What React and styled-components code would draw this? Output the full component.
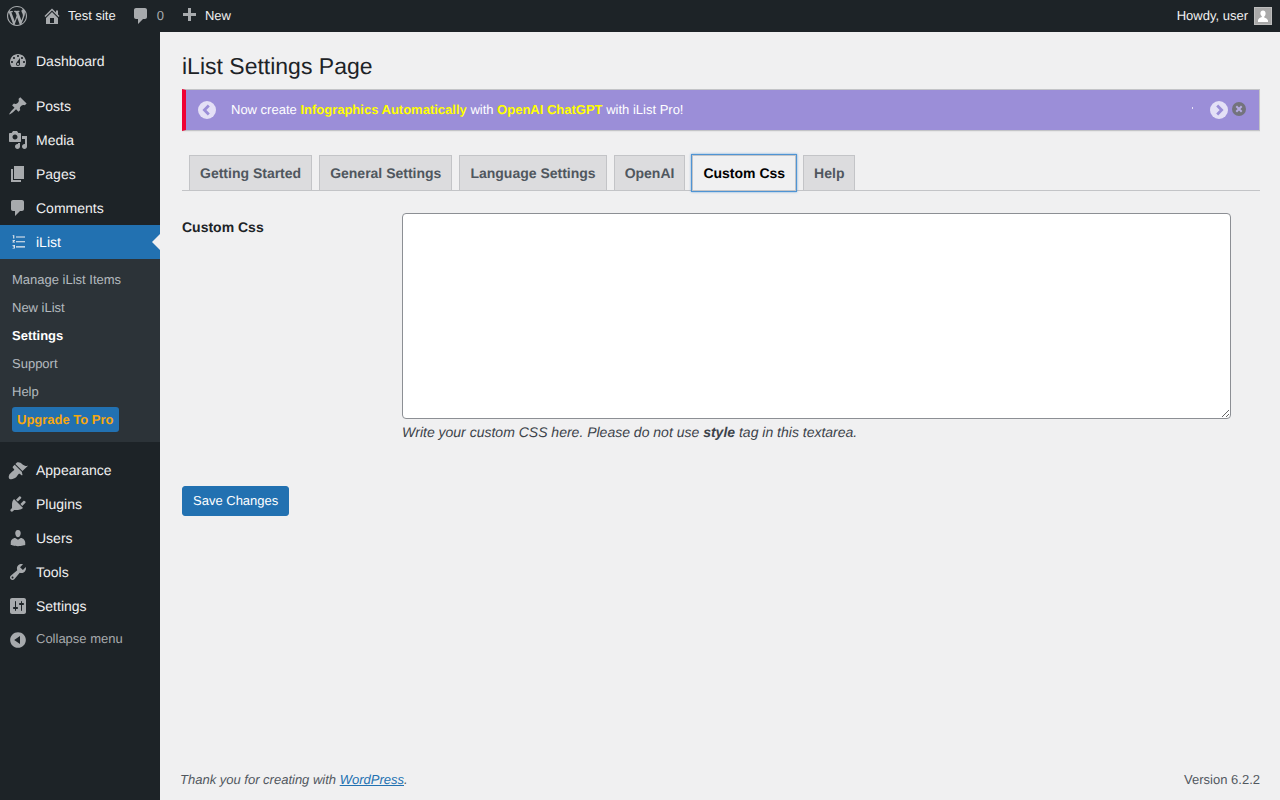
import React from 'react';
import styled, { createGlobalStyle } from 'styled-components';

const Global = createGlobalStyle`
  html, body { margin: 0; padding: 0; background: #f0f0f1; }
  body { font-family: "Liberation Sans", Arial, sans-serif; font-size: 13px; line-height: 1.4em; color: #3c434a; text-rendering: geometricPrecision; }
  * { box-sizing: border-box; }
`;

const P = {
  wp: 'M20 10c0-5.51-4.49-10-10-10C4.48 0 0 4.49 0 10c0 5.52 4.48 10 10 10 5.51 0 10-4.48 10-10zM7.78 15.37L4.37 6.22c.55-.02 1.17-.08 1.17-.08.5-.06.44-1.13-.06-1.11 0 0-1.45.11-2.37.11-.18 0-.37 0-.58-.01C4.12 2.69 6.87 1.11 10 1.11c2.33 0 4.45.87 6.05 2.34-.68-.11-1.65.39-1.65 1.58 0 .74.45 1.36.9 2.1.35.61.55 1.36.55 2.46 0 1.49-1.4 5-1.4 5l-3.03-8.37c.54-.02.82-.17.82-.17.5-.05.44-1.25-.06-1.22 0 0-1.44.12-2.38.12-.87 0-2.33-.12-2.33-.12-.5-.03-.56 1.2-.06 1.22l.92.08 1.26 3.41zM17.41 10c.24-.64.74-1.87.43-4.25.7 1.29 1.05 2.71 1.05 4.25 0 3.29-1.73 6.24-4.4 7.78.97-2.59 1.94-5.2 2.92-7.78zM6.1 18.09C3.12 16.65 1.11 13.53 1.11 10c0-1.3.23-2.48.72-3.59C3.25 10.3 4.67 14.2 6.1 18.09zm4.03-6.63l2.58 6.98c-.86.29-1.76.45-2.71.45-.79 0-1.57-.11-2.29-.33.81-2.38 1.62-4.74 2.42-7.1z',
  home: 'M16 8.5l1.53 1.53-1.06 1.06L10 4.62l-6.47 6.47-1.06-1.06L10 2.5l4 4v-2h2v4zm-6-2.46l6 5.99V18H4v-5.97zM12 17v-5H8v5h4z',
  comments: 'M5 2h9c1.1 0 2 .9 2 2v7c0 1.1-.9 2-2 2h-2l-5 5v-5H5c-1.1 0-2-.9-2-2V4c0-1.1.9-2 2-2z',
  plus: 'M17 7v3h-5v5H9v-5H4V7h5V2h3v5h5z',
  dashboard: 'M3.76 16h12.48c1.1-1.37 1.76-3.11 1.76-5 0-4.42-3.58-8-8-8s-8 3.58-8 8c0 1.89.66 3.63 1.76 5zM10 4c.55 0 1 .45 1 1s-.45 1-1 1-1-.45-1-1 .45-1 1-1zM6 6c.55 0 1 .45 1 1s-.45 1-1 1-1-.45-1-1 .45-1 1-1zm8 0c.55 0 1 .45 1 1s-.45 1-1 1-1-.45-1-1 .45-1 1-1zm-5.37 5.55L12 7v6c0 1.1-.9 2-2 2s-2-.9-2-2c0-.57.24-1.08.63-1.45zM4 10c.55 0 1 .45 1 1s-.45 1-1 1-1-.45-1-1 .45-1 1-1zm12 0c.55 0 1 .45 1 1s-.45 1-1 1-1-.45-1-1 .45-1 1-1zm-5 3c0-.55-.45-1-1-1s-1 .45-1 1 .45 1 1 1 1-.45 1-1z',
  post: 'M10.44 3.02l1.82-1.82 6.36 6.35-1.83 1.82c-1.05-.68-2.48-.57-3.41.36l-.75.75c-.92.93-1.04 2.35-.35 3.41l-1.83 1.82-2.41-2.41-2.8 2.79c-.42.42-3.38 2.71-3.8 2.29s1.86-3.39 2.28-3.81l2.79-2.79L4.1 9.36l1.83-1.82c1.05.69 2.48.57 3.4-.36l.75-.75c.93-.92 1.05-2.35.36-3.41z',
  media: 'M13 11V4c0-.55-.45-1-1-1h-1.67L9 1H5L3.67 3H2c-.55 0-1 .45-1 1v7c0 .55.45 1 1 1h10c.55 0 1-.45 1-1zM7 4.5c1.38 0 2.5 1.12 2.5 2.5S8.38 9.5 7 9.5 4.5 8.38 4.5 7 5.62 4.5 7 4.5zM14 6h5v10.5c0 1.38-1.12 2.5-2.5 2.5S14 17.88 14 16.5s1.12-2.5 2.5-2.5c.17 0 .34.02.5.05V9h-3V6zm-4 8.05V13h2v3.5c0 1.38-1.12 2.5-2.5 2.5S7 17.88 7 16.5 8.12 14 9.5 14c.17 0 .34.02.5.05z',
  page: 'M6 15V2h10v13H6zm-1 1h8v2H3V5h2v11z',
  appearance: 'M14.48 11.06L7.41 3.99l1.5-1.5c.5-.56 2.3-.47 3.51.32.42.28 1.43 1.28 2.91 2.1 1.18.64 2.45 1.26 4.67.88zm-.71.71L6.7 4.7 4.93 6.47c-.39.39-.39 1.02 0 1.41l1.06 1.06c.39.39.39 1.03 0 1.42-.6.6-1.43 1.11-2.21 1.69-.35.26-.7.53-1.01.84C1.43 13.71 0 16.5 1.28 18.72c2.22 1.28 5.01-.15 6.82-1.49.31-.31.58-.66.84-1.01.58-.78 1.09-1.61 1.69-2.21.39-.39 1.03-.39 1.42 0l1.06 1.06c.39.39 1.02.39 1.41 0z',
  plugins: 'M13.11 4.36L9.87 7.6 8 5.73l3.24-3.24c.35-.34 1.05-.2 1.56.32.52.51.66 1.21.31 1.55zm-8 1.77l.91-1.12 9.01 9.01-1.19.84c-.71.71-2.63 1.16-3.82 1.16H6.14L4.9 17.26c-.59.59-1.54.59-2.12 0-.59-.58-.59-1.53 0-2.12l1.24-1.24v-3.88c0-1.13.4-3.19 1.09-3.89zm7.26 3.97l3.24-3.24c.34-.35 1.04-.21 1.55.31.52.51.66 1.21.31 1.55l-3.24 3.25z',
  users: 'M10 9.25c-2.27 0-2.73-3.44-2.73-3.44C7 4.02 7.82 2 9.97 2c2.16 0 2.98 2.02 2.71 3.81 0 0-.41 3.44-2.68 3.44zm0 2.57L12.72 10c2.39 0 4.52 2.33 4.52 4.53v2.49s-3.65 1.13-7.24 1.13c-3.65 0-7.24-1.13-7.24-1.13v-2.49c0-2.25 1.94-4.48 4.47-4.48z',
  tools: 'M16.68 9.77c-1.34 1.34-3.3 1.67-4.95.99l-5.41 6.52c-.99.99-2.59.99-3.58 0s-.99-2.59 0-3.57l6.52-5.42c-.68-1.65-.35-3.61.99-4.95 1.28-1.28 3.12-1.62 4.72-1.06l-2.89 2.89 2.82 2.82 2.86-2.87c.53 1.58.18 3.39-1.08 4.65zM3.81 16.21c.4.39 1.04.39 1.43 0 .4-.4.4-1.04 0-1.43-.39-.4-1.03-.4-1.43 0-.39.39-.39 1.03 0 1.43z',
  settings: 'M18 16V4c0-1.1-.9-2-2-2H4c-1.1 0-2 .9-2 2v12c0 1.1.9 2 2 2h12c1.1 0 2-.9 2-2zM8 11h1c.55 0 1 .45 1 1s-.45 1-1 1H8v1.5c0 .28-.22.5-.5.5s-.5-.22-.5-.5V13H6c-.55 0-1-.45-1-1s.45-1 1-1h1V5.5c0-.28.22-.5.5-.5s.5.22.5.5V11zm5-2h-1c-.55 0-1-.45-1-1s.45-1 1-1h1V5.5c0-.28.22-.5.5-.5s.5.22.5.5V7h1c.55 0 1 .45 1 1s-.45 1-1 1h-1v5.5c0 .28-.22.5-.5.5s-.5-.22-.5-.5V9z',
  collapse: 'M10 2.16c4.33 0 7.84 3.51 7.84 7.84s-3.51 7.84-7.84 7.84S2.16 14.33 2.16 10 5.71 2.16 10 2.16zm2 11.72V6.12L6.18 9.97z',
  list: 'M5.2 3.200h1.100v3.300h-1.100V4.100h-.6v-.5zM4.500 8h2.400v.9l-1.300 1h1.300v.7H4.500v-.8l1.300-1.100H4.500zM4.500 13h2.400v3.600H4.500v-.7h1.400v-.7H4.900v-.6h1v-.8H4.500zM8 4.500h9v1H8zM8 9.200h9v1H8zM8 14.200h9v1.300H8z',
};

const Icon = ({ d, size = 20, className }) => (
  <svg className={className} width={size} height={size} viewBox="0 0 20 20" fill="currentColor" aria-hidden="true"><path d={d} /></svg>
);

const Page = styled.div`
  display: flex;
  flex-direction: column;
  height: 800px;
  overflow: hidden;
`;

const AdminBar = styled.header`
  display: flex;
  align-items: center;
  justify-content: space-between;
  flex: 0 0 32px;
  height: 32px;
  background: #1d2327;
  color: #f0f0f1;
`;

const BarGroup = styled.div`
  display: flex;
  align-items: center;
  height: 32px;
`;

const BarItem = styled.div`
  display: flex;
  align-items: center;
  height: 32px;
  padding: 0 ${p => p.$right ?? 8}px 0 ${p => p.$left ?? 8}px;
  gap: ${p => p.$gap ?? 6}px;
  font-size: 13px;
`;

const BarIcon = styled(Icon)`
  color: #a7aaad;
  flex: none;
`;

const BarCount = styled.span`
  color: #a7aaad;
`;

const Avatar = styled.span`
  display: block;
  width: 18px;
  height: 18px;
  border: 1px solid #bdbdbd;
  background: #a9a9a9;
  flex: none;
`;

const Body = styled.div`
  display: flex;
  flex: 1;
  min-height: 0;
`;

const Sidebar = styled.nav`
  flex: 0 0 160px;
  width: 160px;
  background: #1d2327;
  padding-top: 12px;
`;

const MenuItem = styled.div`
  position: relative;
  display: flex;
  align-items: center;
  height: 34px;
  margin-bottom: ${p => (p.$gapAfter ? 11 : 0)}px;
  background: ${p => (p.$current ? '#2271b1' : 'transparent')};
  color: ${p => (p.$current ? '#fff' : '#f0f0f1')};
  font-size: 14px;
  ${p => p.$current && `
    &::after {
      content: '';
      position: absolute;
      right: 0;
      top: 50%;
      margin-top: -8px;
      border: 8px solid transparent;
      border-right-color: #f0f0f1;
      border-left-width: 0;
    }
  `}
`;

const MenuIcon = styled.span`
  display: flex;
  justify-content: center;
  align-items: center;
  width: 36px;
  flex: none;
  color: ${p => (p.$current ? '#f0f0f1' : '#a7aaad')};
`;

const Collapse = styled.div`
  display: flex;
  align-items: center;
  height: 34px;
  color: #a7aaad;
  font-size: 13px;
`;

const CollapseLabel = styled.span`
  position: relative;
  top: -1px;
`;

const Submenu = styled.div`
  background: #2c3338;
  padding: 7px 0 10px;
  margin-bottom: 11px;
`;

const SubItem = styled.div`
  height: 28px;
  line-height: 28px;
  padding-left: 12px;
  font-size: 13px;
  color: ${p => (p.$active ? '#fff' : 'rgba(240,246,252,.7)')};
  font-weight: ${p => (p.$active ? 600 : 400)};
`;

const Upgrade = styled.div`
  display: inline-block;
  vertical-align: top;
  margin: 1px 0 0 12px;
  padding: 0 5px;
  height: 25px;
  line-height: 25px;
  background: #2271b1;
  border-radius: 3px;
  color: #f5a70f;
  font-weight: 700;
  font-size: 13px;
`;

const Main = styled.main`
  flex: 1;
  min-width: 0;
  display: flex;
  flex-direction: column;
  padding-left: 20px;
`;

const Wrap = styled.div`
  margin: 10px 20px 0 2px;
  flex: 1;
`;

const Title = styled.h1`
  margin: 0;
  padding: 9px 0 4px;
  font-size: 23px;
  font-weight: 400;
  line-height: 30px;
  color: #1d2327;
`;

const Notice = styled.div`
  display: flex;
  align-items: center;
  height: 42px;
  margin-top: 4px;
  padding: 0 12px 0 12px;
  border: 1px solid #c3c4c7;
  border-left: 4px solid #f00034;
  background: #9b8ed8;
  color: #fff;
  font-size: 13px;
  box-shadow: 0 1px 1px rgba(0,0,0,.04);
`;

const NoticeText = styled.span`
  flex: 1;
  margin-left: 15px;
`;

const Highlight = styled.b`
  color: #ffff00;
  font-weight: 700;
`;

const Speck = styled.span`
  width: 1px;
  height: 2px;
  margin: -5px 17px 0 0;
  background: #e4e0f6;
`;

const RoundButton = styled.svg`
  display: block;
  flex: none;
`;

const NoticeClose = styled(RoundButton)`
  margin: -2px 1px 0 4px;
`;

const TabBar = styled.div`
  display: flex;
  margin-top: 24px;
  padding-left: 7px;
  gap: 7px;
  height: 36px;
  border-bottom: 1px solid #c3c4c7;
`;

const Tab = styled.div`
  height: 36px;
  padding: 5px 10px;
  line-height: 24px;
  font-size: 14px;
  font-weight: 600;
  border: 1px solid #c3c4c7;
  background: ${p => (p.$active ? '#f0f0f1' : '#dcdcde')};
  color: ${p => (p.$active ? '#000' : '#50575e')};
  ${p => p.$active && `
    box-shadow: 0 0 0 1px #4f94d4, 0 0 2px 1px rgba(79,148,212,.8);
  `}
`;

const FormRow = styled.div`
  display: flex;
  margin-top: 22px;
`;

const FieldLabel = styled.label`
  flex: 0 0 220px;
  padding-top: 5px;
  font-size: 14px;
  font-weight: 600;
  line-height: 1.3;
  color: #1d2327;
`;

const Field = styled.div`
  flex: 1;
`;

const TextArea = styled.textarea`
  display: block;
  width: 829px;
  height: 206px;
  border: 1px solid #8c8f94;
  border-radius: 4px;
  background: #fff;
  margin: 0;
  padding: 2px 6px;
  font-size: 14px;
  outline: none;
`;

const Hint = styled.p`
  margin: 4px 0 0;
  font-size: 14px;
  font-style: italic;
  line-height: 18px;
  color: #3c434a;
`;

const SaveButton = styled.button`
  display: block;
  margin-top: 45px;
  height: 30px;
  padding: 0 10px;
  border: 1px solid #2271b1;
  border-radius: 3px;
  background: #2271b1;
  color: #fff;
  font-family: inherit;
  font-size: 13px;
  line-height: 28px;
  white-space: nowrap;
  text-rendering: inherit;
`;

const Footer = styled.footer`
  display: flex;
  justify-content: space-between;
  align-items: center;
  height: 18px;
  margin: 0 20px 11px 0;
  font-size: 13px;
  color: #50575e;
`;

const Thanks = styled.span`
  font-style: italic;
`;

const FooterLink = styled.a`
  color: #2271b1;
  text-decoration: underline;
`;

const Circle = ({ dir, className }) => (
  <RoundButton className={className} width="18" height="18" viewBox="0 0 18 18" aria-hidden="true">
    <circle cx="9" cy="9" r="9" fill="#e4e0f6" />
    <path d={dir === 'left' ? 'M10.8 4.6 6.4 9l4.4 4.4' : 'M7.2 4.6 11.6 9l-4.4 4.4'} fill="none" stroke="#9b8ed8" strokeWidth="2.8" />
  </RoundButton>
);

const mainItems = [
  { d: P.media, label: 'Media' },
  { d: P.page, label: 'Pages' },
  { d: P.comments, label: 'Comments' },
];
const lowerItems = [
  { d: P.appearance, label: 'Appearance' },
  { d: P.plugins, label: 'Plugins' },
  { d: P.users, label: 'Users' },
  { d: P.tools, label: 'Tools' },
  { d: P.settings, label: 'Settings' },
];
const subItems = ['Manage iList Items', 'New iList', 'Settings', 'Support', 'Help'];
const tabs = ['Getting Started', 'General Settings', 'Language Settings', 'OpenAI', 'Custom Css', 'Help'];

export default function App() {
  return (
    <Page>
      <Global />
      <AdminBar>
        <BarGroup>
          <BarItem $left={7} $right={7}><BarIcon d={P.wp} /></BarItem>
          <BarItem $left={8} $right={7}><BarIcon d={P.home} />Test site</BarItem>
          <BarItem $left={8} $right={9} $gap={6}><BarIcon d={P.comments} size={20} /><BarCount>0</BarCount></BarItem>
          <BarItem $left={6} $right={8} $gap={6}><BarIcon d={P.plus} size={20} />New</BarItem>
        </BarGroup>
        <BarGroup>
          <BarItem $left={8} $right={8}>Howdy, user
            <Avatar>
              <svg width="16" height="16" viewBox="0 0 16 16" style={{ display: 'block' }} aria-hidden="true">
                <path fill="#fff" d="M8 2.500c1.600 0 2.600 1.200 2.600 2.900 0 1.400-.7 2.700-1.400 3.200v.8c1.500.5 3.300 1.300 3.800 3.100V14H3v-2c.5-1.800 2.300-2.600 3.800-3.100v-.8C6.100 7.600 5.400 6.300 5.400 5.400c0-1.700 1-2.900 2.600-2.900z" />
              </svg>
            </Avatar>
          </BarItem>
        </BarGroup>
      </AdminBar>
      <Body>
        <Sidebar>
          <MenuItem $gapAfter><MenuIcon><Icon d={P.dashboard} /></MenuIcon>Dashboard</MenuItem>
          <MenuItem><MenuIcon><Icon d={P.post} /></MenuIcon>Posts</MenuItem>
          {mainItems.map(i => (
            <MenuItem key={i.label}><MenuIcon><Icon d={i.d} /></MenuIcon>{i.label}</MenuItem>
          ))}
          <MenuItem $current><MenuIcon $current><Icon d={P.list} /></MenuIcon>iList</MenuItem>
          <Submenu>
            {subItems.map(s => <SubItem key={s} $active={s === 'Settings'}>{s}</SubItem>)}
            <Upgrade>Upgrade To Pro</Upgrade>
          </Submenu>
          {lowerItems.map(i => (
            <MenuItem key={i.label}><MenuIcon><Icon d={i.d} /></MenuIcon>{i.label}</MenuItem>
          ))}
          <Collapse><MenuIcon><Icon d={P.collapse} /></MenuIcon><CollapseLabel>Collapse menu</CollapseLabel></Collapse>
        </Sidebar>
        <Main>
          <Wrap>
            <Title>iList Settings Page</Title>
            <Notice>
              <Circle dir="left" />
              <NoticeText>
                Now create <Highlight>Infographics Automatically</Highlight> with <Highlight>OpenAI ChatGPT</Highlight> with iList Pro!
              </NoticeText>
              <Speck />
              <Circle dir="right" />
              <NoticeClose as="svg" width="14" height="14" viewBox="0 0 14 14" aria-hidden="true">
                <circle cx="7" cy="7" r="7" fill="#73737c" />
                <path d="M4.300 4.300l5.400 5.400M9.700 4.300l-5.400 5.400" stroke="#b5abe3" strokeWidth="2" />
              </NoticeClose>
            </Notice>
            <TabBar>
              {tabs.map(t => <Tab key={t} $active={t === 'Custom Css'}>{t}</Tab>)}
            </TabBar>
            <FormRow>
              <FieldLabel htmlFor="css">Custom Css</FieldLabel>
              <Field>
                <TextArea id="css" />
                <Hint>Write your custom CSS here. Please do not use <b>style</b> tag in this textarea.</Hint>
              </Field>
            </FormRow>
            <SaveButton type="button">Save Changes</SaveButton>
          </Wrap>
          <Footer>
            <Thanks>Thank you for creating with <FooterLink href="#">WordPress</FooterLink>.</Thanks>
            <span>Version 6.2.2</span>
          </Footer>
        </Main>
      </Body>
    </Page>
  );
}
